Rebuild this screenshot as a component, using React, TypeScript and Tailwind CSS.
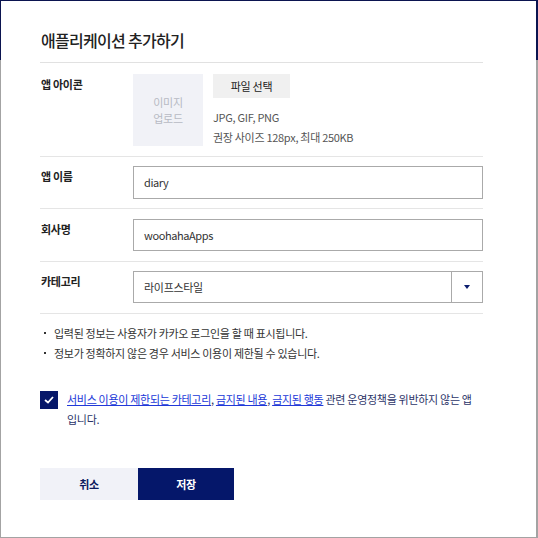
import React from "react";

const F = { fontFamily: '"Noto Sans CJK KR", "Noto Sans", sans-serif' };

export default function App() {
  return (
    <div
      className="w-[538px] h-[538px] pt-[1px] pl-[1px] pr-[2px] pb-[1px] bg-[linear-gradient(to_bottom,#0b1450_0px,#0b1450_60px,#a3a3a3_60px)]"
      style={F}
    >
      <div className="w-full h-full bg-white pl-[39px] pr-[53px] tracking-[-0.3px]">
        <div className="h-[62px] border-b border-[#e1e1e1] pt-[26px]">
          <h1 className="text-[16px] leading-[26px] font-medium text-[#222] tracking-[-0.7px] pl-[1px]">애플리케이션 추가하기</h1>
        </div>

        {/* 앱 아이콘 */}
        <div className="flex pt-[11px] pb-[9px] border-b border-[#e5e5e5]">
          <div className="w-[93px] pl-[1px] text-[11px] leading-[20px] font-bold text-[#222]">앱 아이콘</div>
          <div className="w-[70px] h-[72px] bg-[#f1f2f7] flex items-center justify-center text-center text-[11px] leading-[16px] text-[#b7bac3]">
            이미지
            <br />
            업로드
          </div>
          <div className="ml-[10px] flex flex-col items-start">
            <button className="w-[77px] h-[24px] bg-[#f0f0f0] text-[11px] text-[#222]">파일 선택</button>
            <div className="mt-[9px] text-[11px] leading-[20px] text-[#555]">
              <div>JPG, GIF, PNG</div>
              <div>권장 사이즈 128px, 최대 250KB</div>
            </div>
          </div>
        </div>

        {/* 앱 이름 */}
        <div className="flex pt-[9px] pb-[9px] border-b border-[#e5e5e5]">
          <div className="w-[93px] pl-[1px] text-[11px] leading-[20px] font-bold text-[#222]">앱 이름</div>
          <div className="flex-1 h-[33px] border border-[#aaa] flex items-center pl-[10px] text-[11px] text-[#333] tracking-[-0.4px]">diary</div>
        </div>

        {/* 회사명 */}
        <div className="flex pt-[10px] pb-[10px] border-b border-[#e5e5e5]">
          <div className="w-[93px] pl-[1px] text-[11px] leading-[20px] font-bold text-[#222]">회사명</div>
          <div className="flex-1 h-[32px] border border-[#aaa] flex items-center pl-[10px] text-[11px] text-[#333] tracking-[-0.4px]">woohahaApps</div>
        </div>

        {/* 카테고리 */}
        <div className="flex pt-[9px] pb-[10px] border-b border-[#e5e5e5]">
          <div className="w-[93px] pl-[1px] text-[11px] leading-[20px] font-bold text-[#222]">카테고리</div>
          <div className="flex-1 h-[32px] border border-[#aaa] flex items-center">
            <div className="flex-1 pl-[10px] text-[11px] text-[#333]">라이프스타일</div>
            <div className="w-[31px] h-full border-l border-[#aaa] flex items-center justify-center">
              <svg width="6" height="4" viewBox="0 0 6 4">
                <path d="M0 0H6L3 4Z" fill="#0b1d6e" />
              </svg>
            </div>
          </div>
        </div>

        <ul className="pt-[9px] text-[11px] leading-[20px] text-[#333]">
          <li className="flex items-center">
            <span className="ml-[4px] mr-[8px] w-[2px] h-[2px] bg-[#333]" />
            입력된 정보는 사용자가 카카오 로그인을 할 때 표시됩니다.
          </li>
          <li className="flex items-center">
            <span className="ml-[4px] mr-[8px] w-[2px] h-[2px] bg-[#333]" />
            정보가 정확하지 않은 경우 서비스 이용이 제한될 수 있습니다.
          </li>
        </ul>

        <div className="mt-[26px] flex">
          <div className="mt-[2px] w-[18px] h-[18px] shrink-0 bg-[#061769] flex items-center justify-center">
            <svg width="10" height="8" viewBox="0 0 10 8">
              <path d="M1 4L4 6.5L9 1" stroke="white" strokeWidth="1.8" fill="none" />
            </svg>
          </div>
          <p className="ml-[9px] text-[11px] leading-[20px] text-[#2c3468]">
            <a className="text-[#2138d8] underline">서비스 이용이 제한되는 카테고리</a>,{" "}
            <a className="text-[#2138d8] underline">금지된 내용</a>,{" "}
            <a className="text-[#2138d8] underline">금지된 행동</a> 관련 운영정책을 위반하지 않는 앱
            <br />
            입니다.
          </p>
        </div>

        <div className="mt-[39px] flex">
          <button className="w-[98px] h-[32px] bg-[#f1f2f8] text-[11px] font-bold text-[#0c1a5e]">취소</button>
          <button className="w-[96px] h-[32px] bg-[#05176a] text-[11px] font-bold text-white">저장</button>
        </div>
      </div>
    </div>
  );
}
